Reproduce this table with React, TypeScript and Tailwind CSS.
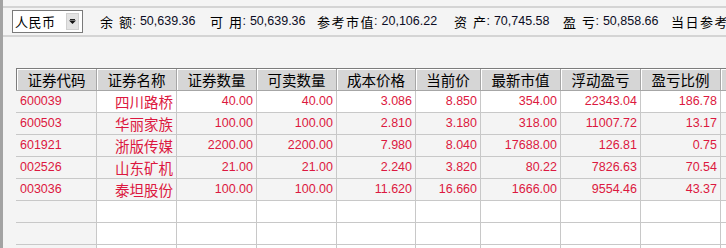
import React from 'react';

const cols = [
  { title: '证券代码', w: 'w-[81px]', align: 'text-left pl-[4px]' },
  { title: '证券名称', w: 'w-[80px]', align: 'text-right pr-[3px]' },
  { title: '证券数量', w: 'w-[80px]', align: 'text-right pr-[3px]' },
  { title: '可卖数量', w: 'w-[80px]', align: 'text-right pr-[3px]' },
  { title: '成本价格', w: 'w-[79px]', align: 'text-right pr-[3px]' },
  { title: '当前价', w: 'w-[65px]', align: 'text-right pr-[3px]' },
  { title: '最新市值', w: 'w-[80px]', align: 'text-right pr-[3px]' },
  { title: '浮动盈亏', w: 'w-[80px]', align: 'text-right pr-[3px]' },
  { title: '盈亏比例', w: 'w-[80px]', align: 'text-right pr-[3px]' },
];

const rows: string[][] = [
  ['600039', '四川路桥', '40.00', '40.00', '3.086', '8.850', '354.00', '22343.04', '186.78'],
  ['600503', '华丽家族', '100.00', '100.00', '2.810', '3.180', '318.00', '11007.72', '13.17'],
  ['601921', '浙版传媒', '2200.00', '2200.00', '7.980', '8.040', '17688.00', '126.81', '0.75'],
  ['002526', '山东矿机', '21.00', '21.00', '2.240', '3.820', '80.22', '7826.63', '70.54'],
  ['003036', '泰坦股份', '100.00', '100.00', '11.620', '16.660', '1666.00', '9554.46', '43.37'],
];

const summary = [
  { label: '余 额', value: '50,639.36', w: 'w-[110px]' },
  { label: '可 用', value: '50,639.36', w: 'w-[107px]' },
  { label: '参考市值', value: '20,106.22', w: 'w-[137px]' },
  { label: '资 产', value: '70,745.58', w: 'w-[109px]' },
  { label: '盈 亏', value: '50,858.66', w: 'w-[108px]' },
];

const font = "font-['Liberation_Sans','Noto_Sans_CJK_SC',sans-serif]";

export default function App() {
  return (
    <div className={`w-[726px] h-[248px] overflow-hidden bg-[#f4f4f4] border-l-[3px] border-[#a3a3a3] flex flex-col ${font}`}>
      <div className="h-[6px] shrink-0" />
      {/* summary bar */}
      <div className="h-[31px] shrink-0 border-y-2 border-[#d4d4d4] flex items-center whitespace-nowrap overflow-hidden">
        <div className="ml-[9px] w-[71px] h-[23px] shrink-0 bg-white border border-[#7a7a7a] flex items-center justify-between pl-[2px] pr-[3px]">
          <span className="text-[13px] text-black tracking-[0.5px] font-['Noto_Sans_CJK_SC',sans-serif]">人民币</span>
          <div className="w-[13px] h-[17px] bg-[#e3e3e3] border border-[#d0d0d0] flex items-center justify-center">
            <svg width="7" height="5" viewBox="0 0 7 5">
              <rect x="1" y="0" width="5" height="1" fill="#222" />
              <path d="M0 1.5 H7 L3.5 5 Z" fill="#111" />
            </svg>
          </div>
        </div>
        <div className="ml-[17px] flex items-center shrink-0">
          {summary.map((s) => (
            <div key={s.label} className={`${s.w} shrink-0 flex items-center`}>
              <span className="text-[13px] tracking-[1.5px] text-black font-['Noto_Sans_CJK_SC',sans-serif]">{s.label}</span>
              <span className="text-[12.5px] text-[#0c0c24] -ml-[1px] mr-[4px]">:</span>
              <span className="text-[12.5px] text-[#0c0c24]">{s.value}</span>
            </div>
          ))}
          <span className="shrink-0 text-[13px] tracking-[1.5px] text-black font-['Noto_Sans_CJK_SC',sans-serif]">当日参考</span>
        </div>
      </div>
      <div className="h-[31px] shrink-0" />
      {/* grid */}
      <div className="ml-[13px] flex flex-col">
        <div className="flex h-[23px] border-t border-[#7c7c7c] border-b border-b-[#a6a6a6] bg-[#d6d6d6]">
          {cols.map((c, i) => (
            <div
              key={c.title}
              className={`${c.w} shrink-0 h-full border-r border-[#a6a6a6] shadow-[inset_1px_1px_0_#ffffff] flex items-center justify-center text-[14.5px] text-black font-['Noto_Sans_CJK_SC',sans-serif] ${i === 0 ? 'border-l border-l-[#7c7c7c]' : ''}`}
            >
              {c.title}
            </div>
          ))}
          <div className="flex-1 shadow-[inset_1px_1px_0_#ffffff]" />
        </div>
        {rows.map((r, ri) => (
          <div key={r[0]} className={`flex h-[22px] border-b border-[#c8c8c8] ${ri === 0 ? 'bg-white' : 'bg-[#f4f4f4]'}`}>
            {r.map((v, ci) => (
              <div
                key={ci}
                className={`${cols[ci].w} ${cols[ci].align} shrink-0 h-full border-r border-[#c8c8c8] flex items-center ${ci === 0 ? 'bg-[#f4f4f4]' : ''} ${ci === 1 ? 'justify-end text-[14.5px] font-[\'Noto_Sans_CJK_SC\',sans-serif]' : ci === 0 ? 'justify-start text-[12.5px]' : 'justify-end text-[12.5px]'} text-[#dc1840]`}
              >
                {v}
              </div>
            ))}
            <div className="flex-1" />
          </div>
        ))}
        {[0, 1, 2].map((k) => (
          <div key={k} className="flex h-[22px] border-b border-[#c8c8c8] bg-white">
            {cols.map((c, ci) => (
              <div key={ci} className={`${c.w} shrink-0 h-full border-r border-[#c8c8c8] ${ci === 0 ? 'bg-[#f4f4f4]' : ''}`} />
            ))}
            <div className="flex-1" />
          </div>
        ))}
      </div>
    </div>
  );
}
